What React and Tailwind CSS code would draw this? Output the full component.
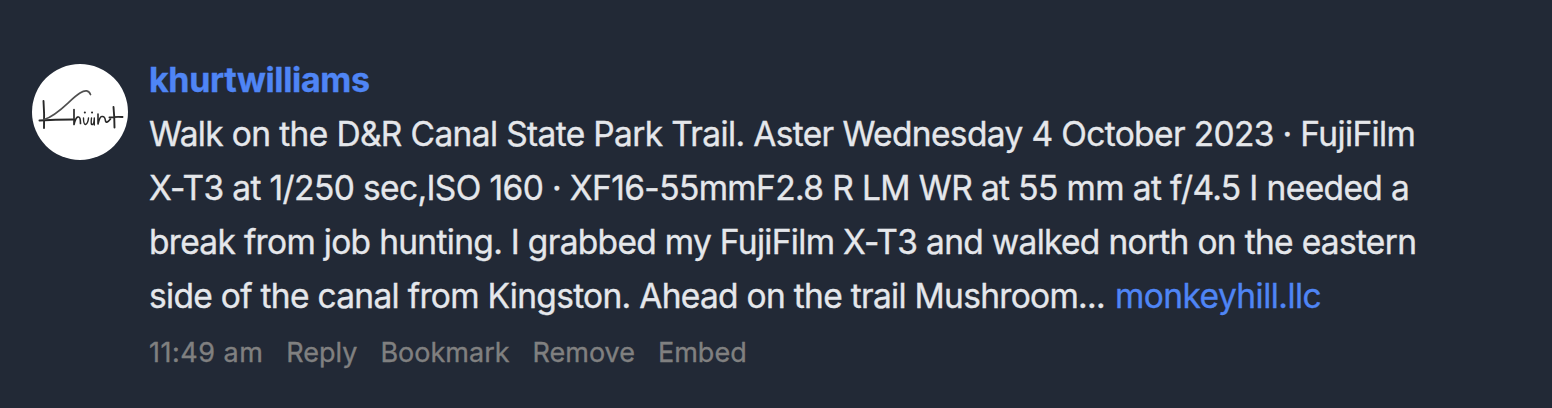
const lines = [
  { text: 'Walk on the D&R Canal State Park Trail. Aster Wednesday 4 October 2023 · FujiFilm', style: 'tracking-[-0.64px]' },
  { text: 'X-T3 at 1/250 sec,ISO 160 · XF16-55mmF2.8 R LM WR at 55 mm at f/4.5 I needed a', style: 'tracking-[-0.62px]' },
  { text: 'break from job hunting. I grabbed my FujiFilm X-T3 and walked north on the eastern', style: 'tracking-[-0.69px]' },
  { text: 'side of the canal from Kingston. Ahead on the trail Mushroom...', style: 'tracking-[-0.7px]' },
];

function Avatar() {
  return (
    <svg className="size-24 shrink-0 rounded-full bg-white" viewBox="0 0 96 96" fill="none" stroke="#292929" strokeLinecap="round" strokeLinejoin="round" role="img" aria-label="khurtwilliams">
      <path d="M11.5 37 Q12.5 50 12 64" strokeWidth="1.9" />
      <path d="M7.5 56.5 Q23 55.5 41 55.5" strokeWidth="2" />
      <path d="M12 55.5 C27 51 38 35 48 29 Q56 24 58.5 30.5" strokeWidth="1.7" stroke="#505050" />
      <path d="M42 45.5 V60.5 Q44 52.5 46.5 53 Q48.5 53 48.5 59.5" strokeWidth="1.7" />
      <path d="M51.5 54 Q51.5 60.5 53.5 60.5 Q56 59.5 56.5 54 M59.5 54 Q58.5 61.5 60.5 60.5 Q62 60 62.3 54 V61" strokeWidth="1.4" />
      <path d="M52.8 48.5 h.1 M60 48.5 h.1" strokeWidth="2" />
      <path d="M66 50 V60 Q68 52 70 52.5 Q73 52 73.5 57 Q74.5 60 78.5 55" strokeWidth="1.6" />
      <path d="M81.5 43 Q82.5 53 82.5 63.5 M77.5 53.5 Q84 52.5 90.5 53" strokeWidth="1.9" />
    </svg>
  );
}

export default function App() {
  return (
    <main className="flex h-[408px] w-[1552px] gap-[21px] bg-[#222936] px-8 pt-16 font-['Inter',sans-serif]">
      <Avatar />
      <article className="-mt-[11px] w-[1370px] shrink-0 whitespace-nowrap text-[33.5px] leading-[54px] text-[#e5e7eb] [-webkit-text-stroke:0.35px]">
        <a className="block text-[34px] font-bold leading-[54px] tracking-[-0.35px] text-[#4f85f5]">khurtwilliams</a>
        {lines.map((line, i) => (
          <p key={line.text} className="flex">
            <span className={line.style}>{line.text}</span>
            {i === 3 && <a className="ml-[10px] tracking-[-0.55px] text-[#4f85f5]">monkeyhill.llc</a>}
          </p>
        ))}
        <footer className="mt-[5px] flex gap-[23px] text-[27px] leading-[50px] text-[#808080]">
          <time className="tracking-[0.5px]">11:49 am</time>
          <a>Reply</a>
          <a>Bookmark</a>
          <a>Remove</a>
          <a>Embed</a>
        </footer>
      </article>
    </main>
  );
}
